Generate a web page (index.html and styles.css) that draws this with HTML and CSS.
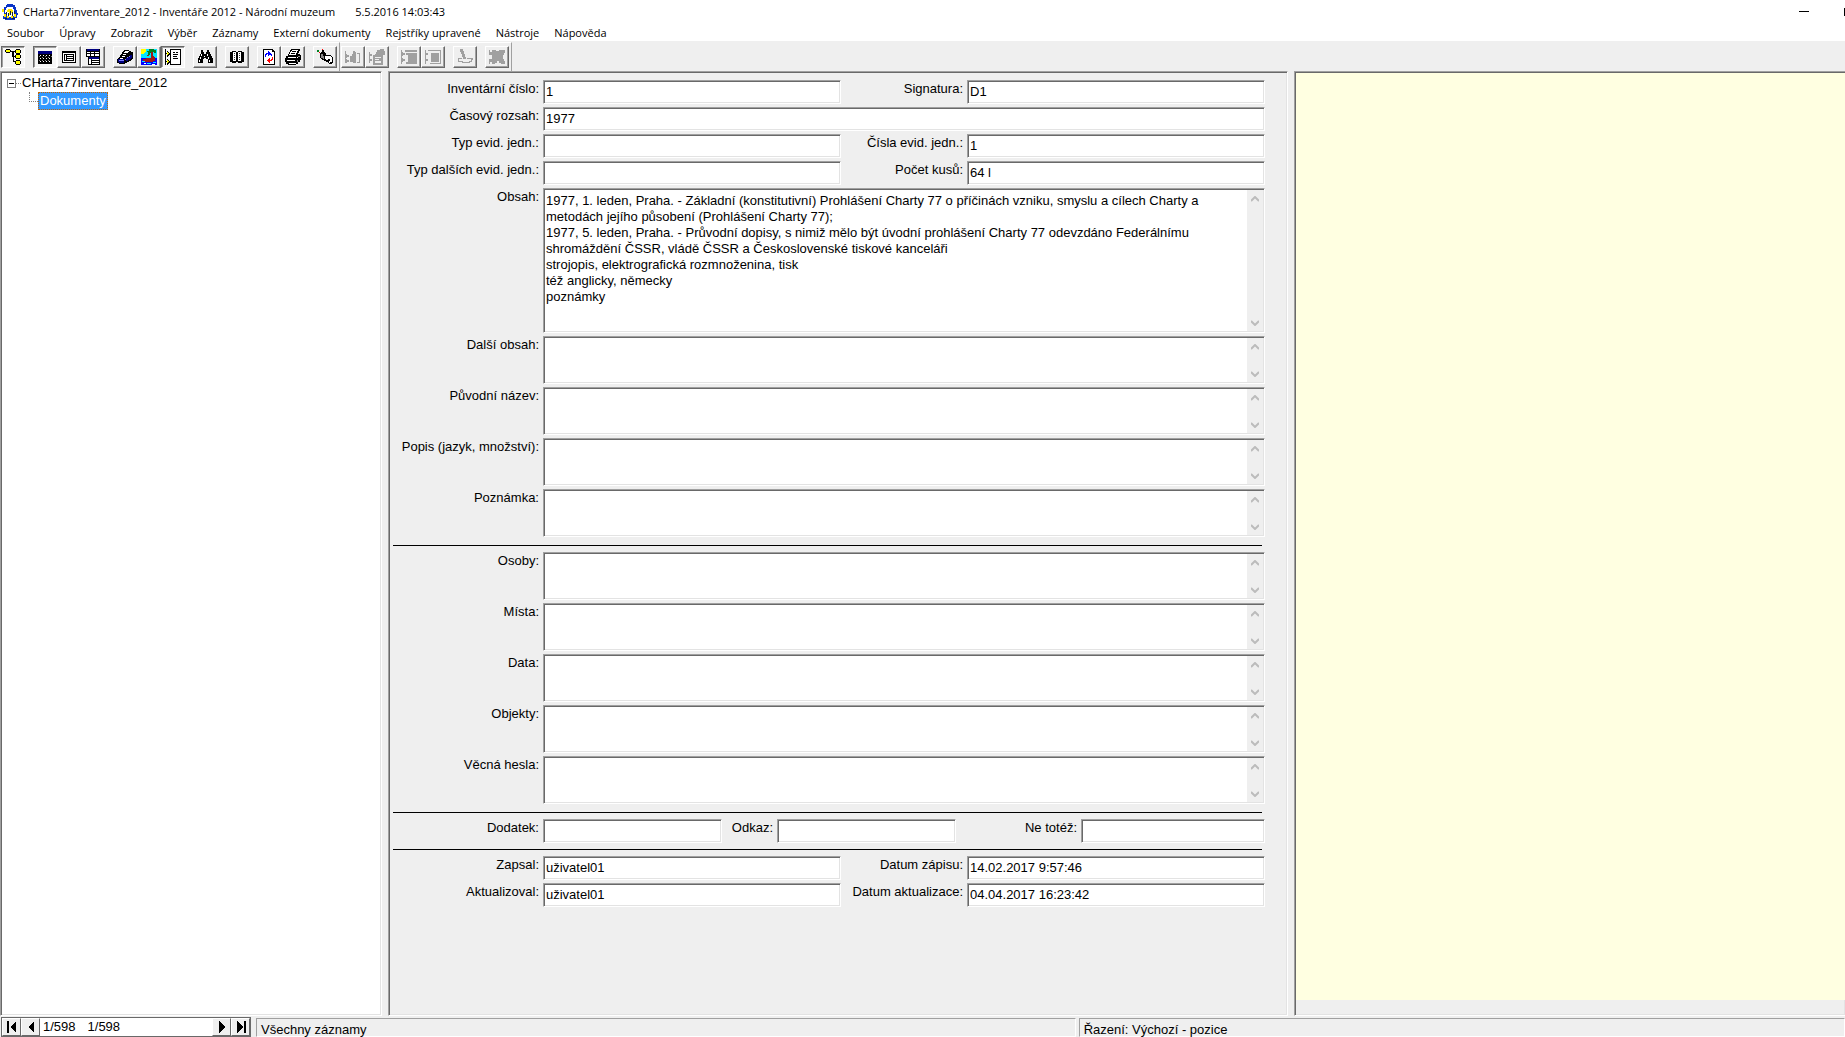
FILE: index.html
```html
<!DOCTYPE html>
<html lang="cs">
<head>
<meta charset="utf-8">
<title>CHarta77inventare_2012 - Inventáře 2012 - Národní muzeum</title>
<link rel="stylesheet" href="styles.css">
</head>
<body>
<header class="titlebar">
  <svg class="icon app-icon" viewBox="0 0 16 16"><path fill="#0a35c8" d="M5 0h6v1h2v2h1v3h1v3h1v2h-1v3h-2v2H3v-1H1v-3h1V7H1V5h1V3h2V1h1z"/><path fill="#fff" d="M5 3h6v2h1v3h1v4h-2v1H5v-2H4V9H3V6h1V4h1z"/><path fill="#ffe600" d="M0 5h2v3H0zM6 5h4v1h1v3H9v2H7V8H5V6h1zM2 10h2v3H2zM5 12h2v2H5zM9 12h2v2H9zM12 10h2v3h-2z"/><path fill="#123" d="M4 8h1v3H4zM6 9h1v3H6zM8 7h1v4H8zM10 8h1v4h-1zM12 7h1v3h-1zM3 14h2v1H3zM10 14h3v1h-3z"/></svg>
  <h1 class="title">CHarta77inventare_2012 - Inventáře 2012 - Národní muzeum</h1>
  <span class="title-date">5.5.2016 14:03:43</span>
  <div class="window-buttons">
    <button class="window-button" aria-label="Minimalizovat"><svg class="icon" viewBox="0 0 10 10"><path d="M0 4h10v1H0z"/></svg></button>
    <button class="window-button" aria-label="Maximalizovat"><svg class="icon" viewBox="0 0 10 10"><path d="M0 1h1v8H0z"/></svg></button>
  </div>
</header>
<nav class="menu">
  <button class="menu-item">Soubor</button>
  <button class="menu-item">Úpravy</button>
  <button class="menu-item">Zobrazit</button>
  <button class="menu-item">Výběr</button>
  <button class="menu-item">Záznamy</button>
  <button class="menu-item">Externí dokumenty</button>
  <button class="menu-item">Rejstříky upravené</button>
  <button class="menu-item">Nástroje</button>
  <button class="menu-item">Nápověda</button>
</nav>
<div class="toolbar" role="toolbar">
  <div class="band">
    <div class="group">
      <button class="tool pressed" aria-label="Strom"><svg class="icon" viewBox="0 0 16 16"><path d="M0 1h1V0h4v1h1v2H5v1H1V3H0zM6 2h5v1H9v9h1v1H8V8H7V3H6zM9 7h1v1H9zM10 1h1V0h4v1h1v3h-1v1h-4V4h-1zM10 6h1V5h4v1h1v3h-1v1h-4V9h-1zM10 12h1v-1h4v1h1v3h-1v1h-4v-1h-1z"/><path fill="#ff0" d="M1 1h4v2H1zM11 1h4v3h-4zM11 6h4v3h-4zM11 12h4v3h-4z"/></svg></button>
    </div>
    <div class="group">
      <button class="tool pressed" aria-label="Tabulka"><svg class="icon" viewBox="0 0 16 16"><path fill="#000080" d="M1 2h14v3H1z"/><path d="M1 5h14v10H1z"/><path fill="#fff" d="M3 6h1v1H3zM6 6h1v1H6zM9 6h1v1H9zM12 6h1v1h-1zM3 9h1v1H3zM6 9h1v1H6zM9 9h1v1H9zM12 9h1v1h-1zM3 12h1v1H3zM6 12h1v1H6zM9 12h1v1H9zM12 12h1v1h-1z"/><path fill="#888" d="M2 7h1v1H2zM5 8h1v1H5zM8 7h1v1H8zM11 8h1v1h-1zM2 11h1v1H2zM5 11h1v1H5zM8 11h1v1H8zM11 11h1v1h-1zM14 7h1v1h-1z"/></svg></button>
      <button class="tool" aria-label="Formulář"><svg class="icon" viewBox="0 0 16 16"><path d="M1 2h14v12H1z"/><path fill="#fff" d="M2 4h12v9H2z"/><path d="M3 5h10v7H3z"/><path fill="#fff" d="M4 6h1v5H4zM6 6h6v1H6zM6 8h6v1H6zM6 10h6v1H6z"/></svg></button>
      <button class="tool" aria-label="Tabulka a formulář"><svg class="icon" viewBox="0 0 16 16"><path d="M1 0h14v16H3V8H1z"/><path fill="#000080" d="M2 0h12v2H2zM4 8h10v2H4z"/><path fill="#fff" d="M2 3h3v1H2zM6 3h3v1H6zM10 3h4v1h-4zM2 5h3v2H2zM6 5h3v2H6zM10 5h4v2h-4zM4 10h2v5H4zM7 10h7v1H7zM7 12h7v1H7zM7 14h7v1H7z"/></svg></button>
    </div>
    <div class="group">
      <button class="tool" aria-label="Kniha"><svg class="icon" viewBox="0 0 16 16"><path d="M7 1h5v1h2v1h2v7h-1v1h-1v1h-2v1h-2v1H8v1H2v-1H0v-4h1V9h1V8h1V6h1V5h1V3h1V2h1z"/><path fill="#fff" d="M8 2h4v1H8zM7 3h4v1H7zM6 5h3v1H6zM5 7h3v1H5zM3 9h3v1H3z"/><path fill="#000080" d="M9 9h2V8h2V6h2v3h-1v1h-1v1h-2v1H9zM1 10h6v4H2v-1H1z"/><path fill="#8080ff" d="M2 11h5v1H2zM8 10h1v1H8zM10 8h1v1h-1zM12 7h1v1h-1z"/></svg></button>
      <button class="tool" aria-label="Obrázek"><svg class="icon" viewBox="0 0 16 16"><path fill="#00e5ff" d="M0 0h16v10H0z"/><path fill="#00f" d="M0 9h16v7H0z"/><path fill="#ff0" d="M0 0h5v3H4v1H3v1H0z"/><path fill="#008020" d="M8 0h5v1h2v3h-2V3h-2v1H9v2H7V3H6V2h2z"/><path fill="#a01818" d="M10 3h2v4h1v1h1v4h-2v1H3v-1H2v-2h3V9h5zM6 6h2v1H6z"/><path fill="#00e5ff" d="M1 12h3v1H1zM6 14h4v1H6zM12 13h3v1h-3z"/><path fill="#fff" d="M3 14h2v1H3zM11 15h3v1h-3z"/></svg></button>
      <button class="tool pressed" aria-label="Strom se záznamem"><svg class="icon" viewBox="0 0 16 16"><path d="M0 0h1v16H0zM1 4h1v1H1zM1 12h1v1H1zM2 2h1v1h1v1h1v2H4v1H3v1H2zM2 10h1v1h1v1h1v2H4v1H3v1H2zM5 0h11v16H5z"/><path fill="#ff0" d="M2 3h1v1h1v1H3v1H2zM2 11h1v1h1v1H3v1H2z"/><path fill="#fff" d="M6 1h9v14H6z"/><path d="M8 3h2v1H8zM11 3h2v1h-2zM8 5h5v1H8zM8 7h4v1H8zM8 9h5v1H8z"/></svg></button>
    </div>
    <div class="group">
      <button class="tool" aria-label="Hledat"><svg class="icon" viewBox="0 0 16 16"><path d="M4 1h2v2h1v2h2V3h1V1h2v2h1v2h1v2h1v2h1v5h-5v-4H9V9H7v1H6v4H1V9h1V7h1V5h1z"/><path fill="#fff" d="M4 5h1v2H4zM3 8h1v2H3zM2 11h1v2H2zM10 5h1v2h-1zM11 8h1v2h-1zM12 11h1v2h-1zM7 7h1v1H7z"/></svg></button>
    </div>
    <div class="group">
      <button class="tool" aria-label="Rejstřík"><svg class="icon" viewBox="0 0 16 16"><path d="M1 3h2V2h4v1h2V2h4v1h2v10h-2v1H9v-1H7v1H3v-1H1z"/><path fill="#fff" d="M4 3h3v9H4zM9 3h3v9H9z"/><path fill="#333" d="M5 4h1v1H5zM5 6h1v1H5zM5 8h1v1H5zM5 10h1v1H5zM10 4h1v1h-1zM10 6h1v1h-1zM10 8h1v1h-1zM10 10h1v1h-1z"/></svg></button>
    </div>
    <div class="group">
      <button class="tool" aria-label="Obnovit"><svg class="icon" viewBox="0 0 16 16"><path d="M2 0h10v1h1v1h1v14H2z"/><path fill="#fff" d="M3 1h8v2h2v12H3z"/><path fill="#00f" d="M7 2h1v1h1v1h1v1h1v2h-1V6H8v1H7V5H6v1H5v2H4V5h1V4h2z"/><path fill="red" d="M11 8h1v3h-1v1H9v2H8v-1H7v-1H6v-1h1v-1h1V9h1v2h1v-1h1z"/></svg></button>
      <button class="tool" aria-label="Tisk"><svg class="icon" viewBox="0 0 16 16"><path d="M6 0h9v2h-1v2h-1v1h2v1h1v5h-1v2h-2v2h-2v1H3v-1H1v-2H0V9h1V7h2V5h1V3h1V1h1z"/><path fill="#fff" d="M7 1h6v1h-1v2h-1v2H4V5h1V3h1V2h1zM3 8h8v1H3zM2 11h8v1H2zM4 14h7v1H4zM12 8h1v1h-1z"/><path d="M7 2h4v1H7zM6 4h4v1H6z"/><path fill="#888" d="M13 7h2v1h-2zM12 11h1v2h-1z"/></svg></button>
    </div>
    <div class="group">
      <button class="tool" aria-label="Ukončit"><svg class="icon" viewBox="0 0 16 16"><path fill="#008020" d="M0 1h2v2H0z"/><path fill="red" d="M5 0h1v1H5zM2 3h1v1H2z"/><path d="M5 1h2v2h1v1h1v2h5v1h1v1h1v6h-1v1h-3v-1h-1v-1H9v-1H7v-1H5v-1H4V9H3V4h1V3h1z"/><path fill="#fff" d="M8 7h6v1h1v5h-2v1h-1v-2h1v-2h-2v1H9v-1H8z"/><path fill="#888" d="M4 5h2v2h1v3H6V9H4z"/></svg></button>
    </div>
  </div>
  <div class="band">
    <div class="group">
      <button class="tool" disabled aria-label="Zařadit"><svg class="icon dim" viewBox="0 0 16 16"><path d="M0 2h1v3h1v1h2v2H2v1H1v1h1v1h2v2H2v1H0zM5 7h2V5h1v8H5zM8 2h2v1h1v11H8zM12 4h3v10h-3v-1h2V5h-2z"/></svg></button>
      <button class="tool" disabled aria-label="Upravit"><svg class="icon dim" viewBox="0 0 16 16"><path d="M0 3h1v2h2v2H1v3h2v2H1v2H0zM4 6h2V5h1V3h1V1h3V0h4v2h1v4h-2v10H4zM6 8v1h6V8zM6 10v1h4v-1zM6 12v2h6v-2z"/></svg></button>
    </div>
    <div class="group">
      <button class="tool" disabled aria-label="Sloučit"><svg class="icon dim" viewBox="0 0 16 16"><path d="M0 1h1v2h1v1h2v2H2v1H1v2h1v1h2v2H2v1H1v2H0zM4 1h12v2H4zM5 4h11v11H5v-2h2V6H5z"/></svg></button>
      <button class="tool" disabled aria-label="Rozdělit"><svg class="icon dim" viewBox="0 0 16 16"><path d="M0 1h1v3h2v2H1v4h2v2H1v3H0zM3 1h13v14H5v-1h10V2H3zM6 4h8v9H6z"/></svg></button>
    </div>
    <div class="group">
      <button class="tool" disabled aria-label="Poznámka"><svg class="icon dim" viewBox="0 0 16 16"><path d="M3 0h3v2h1v3h1v3h1v2H6V8H5V5H4V3H3zM1 9h4v1H2v2h4v1h6v-1h2v-2h-4V9h6v2h-1v2h-2v1H5v-1H1z"/></svg></button>
    </div>
    <div class="group">
      <button class="tool" disabled aria-label="Zrušit"><svg class="icon dim" viewBox="0 0 16 16"><path d="M0 1h1v2h2V1h4v1h3V1h6v3h-1v2h-1v4h1v2h1v3h-4v-1h-2v-2H8v2H6v1H3v-2H1v2H0v-5h3V6H0z"/></svg></button>
    </div>
  </div>
</div>
<main class="panes">
  <section class="pane tree">
    <div class="node">
      <button class="expander" aria-label="Sbalit"></button><span class="dots"></span><a class="node-label" href="#">CHarta77inventare_2012</a>
    </div>
    <div class="node child">
      <span class="elbow"></span><a class="node-label selected" href="#">Dokumenty</a>
    </div>
  </section>
  <form class="pane record">
    <div class="row pair">
      <label for="inv">Inventární číslo:</label><input id="inv" class="field" value="1">
      <label for="sig">Signatura:</label><input id="sig" class="field" value="D1">
    </div>
    <div class="row single">
      <label for="cas">Časový rozsah:</label><input id="cas" class="field" value="1977">
    </div>
    <div class="row pair">
      <label for="typ">Typ evid. jedn.:</label><input id="typ" class="field">
      <label for="cisla">Čísla evid. jedn.:</label><input id="cisla" class="field" value="1">
    </div>
    <div class="row pair">
      <label for="typd">Typ dalších evid. jedn.:</label><input id="typd" class="field">
      <label for="kusy">Počet kusů:</label><input id="kusy" class="field" value="64 l">
    </div>
    <div class="row single">
      <label for="obsah">Obsah:</label>
      <div class="memo tall"><textarea id="obsah">1977, 1. leden, Praha. - Základní (konstitutivní) Prohlášení Charty 77 o příčinách vzniku, smyslu a cílech Charty a
metodách jejího působení (Prohlášení Charty 77);
1977, 5. leden, Praha. - Průvodní dopisy, s nimiž mělo být úvodní prohlášení Charty 77 odevzdáno Federálnímu
shromáždění ČSSR, vládě ČSSR a Československé tiskové kanceláři
strojopis, elektrografická rozmnoženina, tisk
též anglicky, německy
poznámky</textarea><div class="scroll"><svg class="arrow" viewBox="0 0 8 6"><path d="M0 5l4-4 4 4"/></svg><svg class="arrow" viewBox="0 0 8 6"><path d="M0 1l4 4 4-4"/></svg></div></div>
    </div>
    <div class="row single">
      <label for="dalsi">Další obsah:</label>
      <div class="memo"><textarea id="dalsi"></textarea><div class="scroll"><svg class="arrow" viewBox="0 0 8 6"><path d="M0 5l4-4 4 4"/></svg><svg class="arrow" viewBox="0 0 8 6"><path d="M0 1l4 4 4-4"/></svg></div></div>
    </div>
    <div class="row single">
      <label for="nazev">Původní název:</label>
      <div class="memo"><textarea id="nazev"></textarea><div class="scroll"><svg class="arrow" viewBox="0 0 8 6"><path d="M0 5l4-4 4 4"/></svg><svg class="arrow" viewBox="0 0 8 6"><path d="M0 1l4 4 4-4"/></svg></div></div>
    </div>
    <div class="row single">
      <label for="popis">Popis (jazyk, množství):</label>
      <div class="memo"><textarea id="popis"></textarea><div class="scroll"><svg class="arrow" viewBox="0 0 8 6"><path d="M0 5l4-4 4 4"/></svg><svg class="arrow" viewBox="0 0 8 6"><path d="M0 1l4 4 4-4"/></svg></div></div>
    </div>
    <div class="row single">
      <label for="pozn">Poznámka:</label>
      <div class="memo"><textarea id="pozn"></textarea><div class="scroll"><svg class="arrow" viewBox="0 0 8 6"><path d="M0 5l4-4 4 4"/></svg><svg class="arrow" viewBox="0 0 8 6"><path d="M0 1l4 4 4-4"/></svg></div></div>
    </div>
    <hr class="rule">
    <div class="row single">
      <label for="osoby">Osoby:</label>
      <div class="memo"><textarea id="osoby"></textarea><div class="scroll"><svg class="arrow" viewBox="0 0 8 6"><path d="M0 5l4-4 4 4"/></svg><svg class="arrow" viewBox="0 0 8 6"><path d="M0 1l4 4 4-4"/></svg></div></div>
    </div>
    <div class="row single">
      <label for="mista">Místa:</label>
      <div class="memo"><textarea id="mista"></textarea><div class="scroll"><svg class="arrow" viewBox="0 0 8 6"><path d="M0 5l4-4 4 4"/></svg><svg class="arrow" viewBox="0 0 8 6"><path d="M0 1l4 4 4-4"/></svg></div></div>
    </div>
    <div class="row single">
      <label for="data">Data:</label>
      <div class="memo"><textarea id="data"></textarea><div class="scroll"><svg class="arrow" viewBox="0 0 8 6"><path d="M0 5l4-4 4 4"/></svg><svg class="arrow" viewBox="0 0 8 6"><path d="M0 1l4 4 4-4"/></svg></div></div>
    </div>
    <div class="row single">
      <label for="objekty">Objekty:</label>
      <div class="memo"><textarea id="objekty"></textarea><div class="scroll"><svg class="arrow" viewBox="0 0 8 6"><path d="M0 5l4-4 4 4"/></svg><svg class="arrow" viewBox="0 0 8 6"><path d="M0 1l4 4 4-4"/></svg></div></div>
    </div>
    <div class="row single">
      <label for="hesla">Věcná hesla:</label>
      <div class="memo"><textarea id="hesla"></textarea><div class="scroll"><svg class="arrow" viewBox="0 0 8 6"><path d="M0 5l4-4 4 4"/></svg><svg class="arrow" viewBox="0 0 8 6"><path d="M0 1l4 4 4-4"/></svg></div></div>
    </div>
    <hr class="rule">
    <div class="row triple">
      <label for="dodatek">Dodatek:</label><input id="dodatek" class="field">
      <label for="odkaz">Odkaz:</label><input id="odkaz" class="field">
      <label for="netotez">Ne totéž:</label><input id="netotez" class="field">
    </div>
    <hr class="rule tight">
    <div class="row pair">
      <label for="zapsal">Zapsal:</label><input id="zapsal" class="field" value="uživatel01">
      <label for="dzapis">Datum zápisu:</label><input id="dzapis" class="field" value="14.02.2017 9:57:46">
    </div>
    <div class="row pair">
      <label for="akt">Aktualizoval:</label><input id="akt" class="field" value="uživatel01">
      <label for="dakt">Datum aktualizace:</label><input id="dakt" class="field" value="04.04.2017 16:23:42">
    </div>
  </form>
  <section class="pane preview"><div class="sheet"></div></section>
</main>
<footer class="status">
  <div class="navigator">
    <button class="nav-button" aria-label="První"><svg class="icon" viewBox="0 0 10 12"><path d="M0 0h2v12H0zM9 0v12L3 6z"/></svg></button>
    <button class="nav-button" aria-label="Předchozí"><svg class="icon" viewBox="0 0 10 12"><path d="M8 0v12L2 6z"/></svg></button>
    <span class="position"><span>1/598</span><span>1/598</span></span>
    <button class="nav-button" aria-label="Další"><svg class="icon" viewBox="0 0 10 12"><path d="M2 0v12l6-6z"/></svg></button>
    <button class="nav-button" aria-label="Poslední"><svg class="icon" viewBox="0 0 10 12"><path d="M1 0v12l6-6zM8 0h2v12H8z"/></svg></button>
  </div>
  <div class="status-cell filter">Všechny záznamy</div>
  <div class="status-cell sort">Řazení: Výchozí - pozice</div>
</footer>
</body>
</html>
```
FILE: styles.css
```css
* {
  box-sizing: border-box;
}

body {
  margin: 0;
  height: 100vh;
  display: flex;
  flex-direction: column;
  overflow: hidden;
  background: #efefef;
  color: #000;
  font: 13px/16px "Liberation Sans", Arial, sans-serif;
}

button {
  margin: 0;
  padding: 0;
  border: 0;
  background: none;
  color: inherit;
  font: inherit;
}

.icon {
  display: block;
  width: 16px;
  height: 16px;
  shape-rendering: crispEdges;
}

/* Title bar and menu */
.titlebar,
.menu {
  flex: none;
  display: flex;
  align-items: center;
  background: #fff;
  font: 11px/16px "Open Sans", "Noto Sans", sans-serif;
  white-space: nowrap;
}

.titlebar {
  height: 23px;
  padding-left: 2px;
}

.title {
  margin: 0 20px 0 5px;
  font: inherit;
}

.window-buttons {
  margin-left: auto;
  display: flex;
  gap: 35px;
  overflow: hidden;
  width: 46px;
}

.window-button .icon {
  width: 10px;
  height: 10px;
}

.menu {
  height: 18px;
  gap: 1px;
  padding-top: 2px;
}

.menu-item {
  padding: 0 7px;
}

/* Toolbar */
.toolbar {
  flex: none;
  display: flex;
  height: 30px;
  padding-top: 1px;
}

.band {
  display: flex;
  gap: 8px;
  padding: 3px 2px 2px 1px;
  border-top: 1px solid #fff;
  border-right: 1px solid #a0a0a0;
}

.group {
  display: flex;
}

.tool {
  display: grid;
  place-items: center;
  width: 24px;
  height: 22px;
  border: 1px solid;
  border-color: #fff #696969 #696969 #fff;
  box-shadow: inset -1px -1px 0 #a0a0a0;
}

.tool.pressed {
  border-color: #696969 #fff #fff #696969;
  box-shadow: inset 1px 1px 0 #a0a0a0;
  background: #f7f7f7;
}

.dim {
  fill: #a0a0a0;
}

/* Sunken edge shared by panes and fields */
.pane,
.field,
.memo {
  border: 1px solid;
  border-color: #a0a0a0 #fff #fff #a0a0a0;
  box-shadow: inset 1px 1px 0 #696969, inset -1px -1px 0 #e3e3e3;
}

.panes {
  flex: 1;
  min-height: 0;
  display: grid;
  grid-template-columns: 382fr 900fr 551fr;
  gap: 6px;
}

.pane {
  min-width: 0;
  overflow: hidden;
}

/* Tree */
.tree {
  padding: 2px 6px;
  background: #fff;
}

.node {
  display: flex;
  align-items: center;
  height: 18px;
}

.node-label {
  padding: 0 1px;
  color: #000;
  text-decoration: none;
  line-height: 16px;
}

.selected {
  border: 1px dotted #c86400;
  background: #39f;
  color: #fff;
}

.expander {
  width: 9px;
  height: 9px;
  border: 1px solid #808080;
  background: linear-gradient(#000, #000) center / 5px 1px no-repeat;
}

.dots {
  width: 5px;
  border-top: 1px dotted #808080;
}

.child {
  padding-left: 22px;
}

.elbow {
  align-self: flex-start;
  width: 9px;
  height: 10px;
  border-left: 1px dotted #808080;
  border-bottom: 1px dotted #808080;
}

/* Record form */
.record {
  display: flex;
  flex-direction: column;
  gap: 3px;
  padding: 8px 22px 8px 4px;
}

.row {
  display: grid;
  column-gap: 4px;
}

.single {
  grid-template-columns: 146px 1fr;
}

.pair {
  grid-template-columns: 146px 1fr 118px 1fr;
}

.triple {
  grid-template-columns: 146px 179fr 47px 179fr 117px 184fr;
}

.row label {
  padding-top: 1px;
  text-align: right;
  white-space: nowrap;
}

.field {
  width: 100%;
  min-width: 0;
  height: 24px;
  padding: 1px 2px 3px;
  border-radius: 0;
  background: #fff;
  font: inherit;
}

.memo {
  display: flex;
  height: 48px;
  padding: 1px;
  background: #fff;
}

.memo.tall {
  height: 145px;
}

.memo textarea {
  flex: 1;
  min-width: 0;
  padding: 3px 1px;
  border: 0;
  overflow: hidden;
  resize: none;
  background: none;
  font: inherit;
}

.scroll {
  display: flex;
  flex-direction: column;
  justify-content: space-between;
  align-items: center;
  width: 16px;
  padding: 6px 0 5px;
  background: #efefef;
}

.arrow {
  width: 8px;
  height: 6px;
  fill: none;
  stroke: #bcbcbc;
  stroke-width: 2px;
}

.rule {
  width: calc(100% - 3px);
  height: 1px;
  margin: 5px 3px 3px 0;
  border: 0;
  background: #000;
}

.rule.tight {
  margin-top: 3px;
}

/* Preview */
.preview {
  padding: 1px 0 15px 1px;
  border-right: 0;
}

.sheet {
  height: 100%;
  background: #ffffe1;
}

/* Status bar */
.status {
  flex: none;
  display: flex;
  height: 21px;
  overflow: hidden;
}

.navigator {
  display: flex;
  align-items: center;
  width: 250px;
  height: 20px;
  margin: 1px 5px 0 1px;
  border: 1px solid #696969;
  background: #fff;
}

.nav-button {
  display: grid;
  place-items: center;
  width: 19px;
  height: 18px;
  border: 1px solid;
  border-color: #fff #696969 #696969 #fff;
  background: #efefef;
}

.nav-button .icon {
  width: 10px;
  height: 12px;
}

.position {
  flex: 1;
  display: flex;
  gap: 12px;
  padding-left: 3px;
}

.status-cell {
  margin-top: 2px;
  padding: 3px 4px 0;
  border: 1px solid;
  border-color: #a0a0a0 #fff #fff #a0a0a0;
  white-space: nowrap;
}

.filter {
  flex: 820;
  margin-right: 3px;
}

.sort {
  flex: 766;
}
```
